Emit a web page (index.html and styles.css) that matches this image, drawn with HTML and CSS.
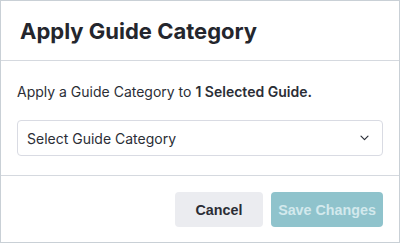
FILE: index.html
```html
<!DOCTYPE html>
<html>
<head>
<meta charset="utf-8">
<link rel="stylesheet" href="styles.css">
</head>
<body>
<div class="modal">
  <div class="modal-header">
    <h2 class="modal-title">Apply Guide Category</h2>
  </div>
  <div class="modal-body">
    <p class="intro">Apply a Guide Category to <strong>1 Selected Guide.</strong></p>
    <div class="select">
      <span class="select-label">Select Guide Category</span>
      <svg class="chevron" width="9" height="6" viewBox="0 0 9 6"><path d="M1 1.2l3.5 3.5 3.5-3.5" fill="none" stroke="#2b2f38" stroke-width="1.2" stroke-linecap="round" stroke-linejoin="round"/></svg>
    </div>
  </div>
  <div class="modal-footer">
    <button class="btn btn-cancel">Cancel</button>
    <button class="btn btn-save">Save Changes</button>
  </div>
</div>
</body>
</html>
```
FILE: styles.css
```css
html, body {
  margin: 0;
  padding: 0;
  background: #ffffff;
}
.modal {
  width: 400px;
  height: 243px;
  box-sizing: border-box;
  border: 1px solid #c9d0d6;
  background: #fff;
  display: flex;
  flex-direction: column;
}
.modal-header {
  height: 60px;
  box-sizing: border-box;
  border-bottom: 1px solid #d5d9df;
  display: flex;
  align-items: center;
  padding: 0 19px;
}
.modal-title {
  margin: 0;
  font-family: Inter, sans-serif;
  font-weight: 700;
  font-size: 22px;
  color: #24262d;
  padding-top: 1px;
}
.modal-body {
  height: 115px;
  box-sizing: border-box;
  border-bottom: 1px solid #d5d9df;
  padding: 19px 16px 0 16px;
}
.intro {
  margin: 0;
  font-family: Inter, sans-serif;
  font-size: 14px;
  line-height: 24px;
  color: #2b2e36;
}
.intro strong {
  font-weight: 600;
}
.select {
  margin-top: 16px;
  height: 36px;
  box-sizing: border-box;
  border: 1px solid #d9dbe3;
  border-radius: 4px;
  display: flex;
  align-items: center;
  justify-content: space-between;
  padding: 0 13px 0 9px;
}
.select-label {
  font-family: Inter, sans-serif;
  font-size: 14px;
  color: #2b2e36;
}
.chevron {
  display: block;
}
.modal-footer {
  flex: 1;
  display: flex;
  justify-content: flex-end;
  align-items: flex-start;
  padding: 16px 16px 0 0;
  gap: 8px;
}
.btn {
  height: 35px;
  border: none;
  border-radius: 4px;
  font-family: "Liberation Sans", Arial, sans-serif;
  font-weight: 700;
  font-size: 14.3px;
  padding: 0;
}
.btn-cancel {
  width: 88px;
  background: #ebecf0;
  color: #2b2d35;
}
.btn-save {
  width: 112px;
  background: #8fc3cc;
  color: #d3e9ed;
}
```
